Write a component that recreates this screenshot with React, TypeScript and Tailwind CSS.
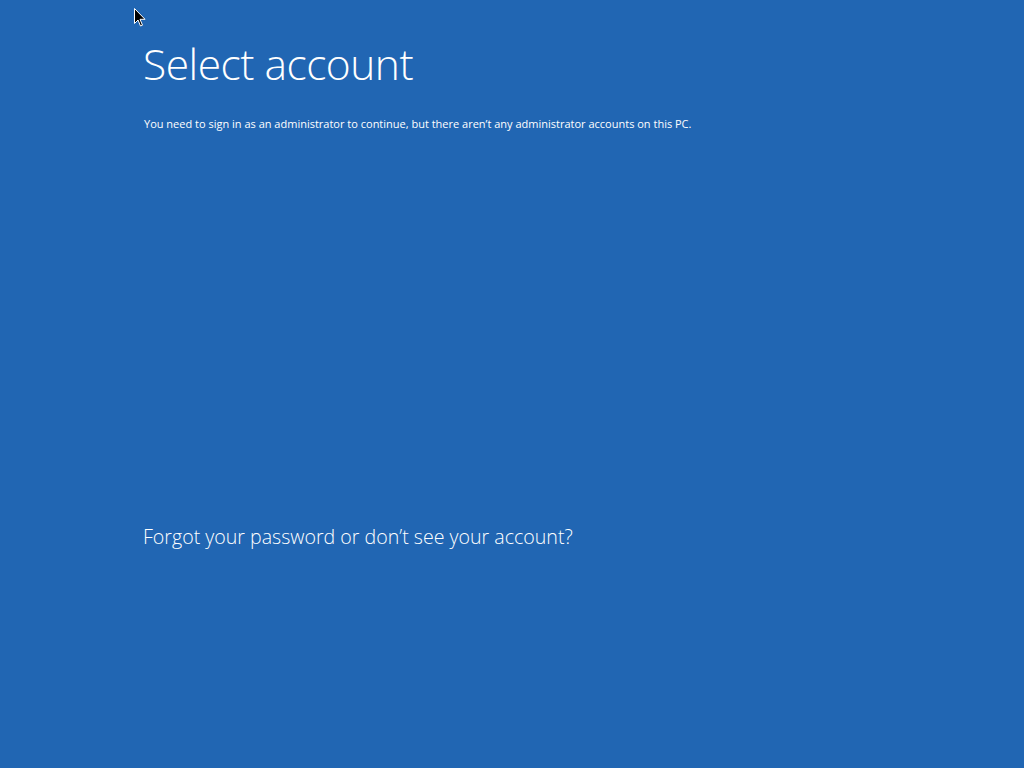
import React from 'react';

// Small mouse pointer drawn on top of the screen
const Cursor: React.FC = () => (
  <svg className="absolute left-[134px] top-[8px]" width="13" height="20" viewBox="0 0 13 20">
    <path d="M0.5 0.5 L0.5 15.5 L4 12 L6.5 18 L8.5 17.2 L6 11.3 L11 11.3 Z" fill="#000" stroke="#fff" strokeWidth="1" />
  </svg>
);

const App: React.FC = () => {
  return (
    <div
      className="relative w-full h-[768px] bg-[#2166b3] text-white overflow-hidden"
      style={{ fontFamily: '"Open Sans", "Noto Sans", sans-serif' }}
    >
      <Cursor />
      <div className="flex flex-col pl-[143px] pt-[36px]">
        <h1 className="text-[42.5px] font-light leading-[56px] tracking-[-0.5px]">Select account</h1>
        <p className="mt-[24px] pl-[1px] text-[11px] leading-[16px]">
          You need to sign in as an administrator to continue, but there aren’t any administrator accounts on this PC.
        </p>
        <button className="mt-[391px] self-start text-[19.6px] font-light leading-[28px] text-white">
          Forgot your password or don’t see your account?
        </button>
      </div>
    </div>
  );
};

export default App;
